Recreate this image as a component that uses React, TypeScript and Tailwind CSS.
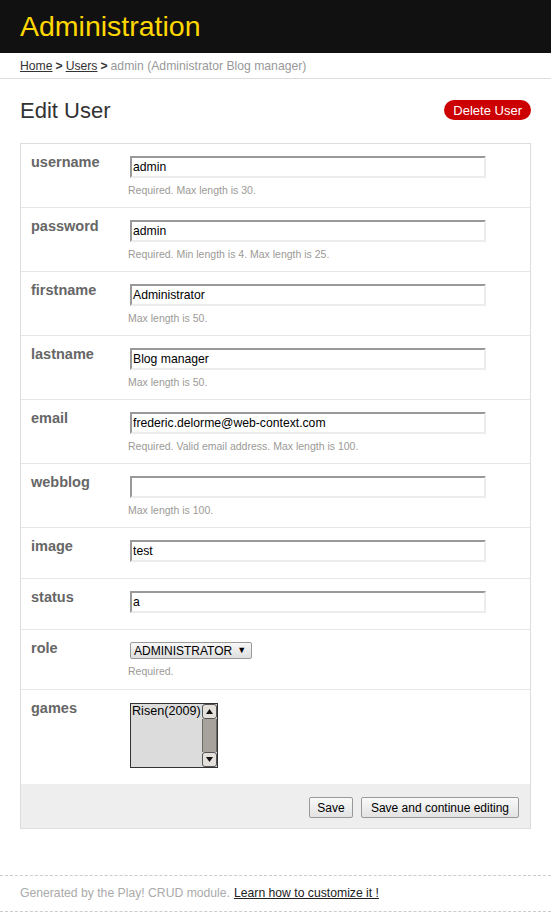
import React from "react";

const FONT = { fontFamily: '"Liberation Sans", Arial, sans-serif' };

interface Field {
  name: string;
  value: string;
  help?: string;
}

const FIELDS: Field[] = [
  { name: "username", value: "admin", help: "Required. Max length is 30." },
  { name: "password", value: "admin", help: "Required. Min length is 4. Max length is 25." },
  { name: "firstname", value: "Administrator", help: "Max length is 50." },
  { name: "lastname", value: "Blog manager", help: "Max length is 50." },
  {
    name: "email",
    value: "frederic.delorme@web-context.com",
    help: "Required. Valid email address. Max length is 100.",
  },
  { name: "webblog", value: "", help: "Max length is 100." },
  { name: "image", value: "test" },
  { name: "status", value: "a" },
];

function Label({ children }: { children: React.ReactNode }) {
  return (
    <div className="w-[99px] shrink-0 text-[14.5px] leading-[13px] font-bold text-[#666]">
      {children}
    </div>
  );
}

function Help({ children }: { children: React.ReactNode }) {
  return (
    <div className="mt-[6px] -ml-[2px] text-[10.5px] leading-[13px] text-[#9c9a96]">
      {children}
    </div>
  );
}

function TextRow({ field }: { field: Field }) {
  return (
    <div
      className={
        "flex pl-[10px] pt-[12px] border-b border-[#e6e6e6] " +
        (field.help ? "pb-[10px]" : "pb-[16px]")
      }
    >
      <Label>{field.name}</Label>
      <div>
        <div className="w-[356px] h-[22px] border-2 border-t-[#999] border-l-[#999] border-b-[#ececec] border-r-[#ececec] bg-white pl-[1px] text-[12.2px] leading-[18px] text-black">
          {field.value}
        </div>
        {field.help && <Help>{field.help}</Help>}
      </div>
    </div>
  );
}

function ScrollBtn({ up }: { up: boolean }) {
  return (
    <div className="h-[15px] border border-[#555] rounded-[3px] bg-[#e4e0dc] flex items-center justify-center">
      <svg width="7" height="5" viewBox="0 0 7 5">
        {up ? (
          <polygon points="3.5,0 7,5 0,5" fill="#111" />
        ) : (
          <polygon points="0,0 7,0 3.5,5" fill="#111" />
        )}
      </svg>
    </div>
  );
}

export default function App() {
  return (
    <div className="w-[551px] min-h-[912px] bg-white" style={FONT}>
      {/* Header */}
      <div className="h-[53px] bg-[#111] px-[20px] flex items-center">
        <h1 className="text-[28.5px] leading-none text-[#ffd700]">Administration</h1>
      </div>

      {/* Breadcrumb */}
      <div className="h-[26px] border-b border-[#ddd] px-[20px] pt-[1px] flex items-center text-[12.2px] text-[#999]">
        <a className="underline text-[#333]">Home</a>
        <span className="font-bold text-[#333] mx-[3px]">&gt;</span>
        <a className="underline text-[#333]">Users</a>
        <span className="font-bold text-[#333] mx-[3px]">&gt;</span>
        <span>admin (Administrator Blog manager)</span>
      </div>

      {/* Title */}
      <div className="h-[64px] px-[20px] flex items-center justify-between">
        <h2 className="text-[22px] leading-none text-[#333]">Edit User</h2>
        <button className="h-[20px] px-[9px] rounded-full bg-[#cc0000] text-white text-[13px] leading-none mt-[-2px]">
          Delete User
        </button>
      </div>

      {/* Form */}
      <div className="ml-[20px] w-[511px] border border-[#ddd]">
        {FIELDS.map((f) => (
          <TextRow key={f.name} field={f} />
        ))}

        {/* role */}
        <div className="flex pl-[10px] pt-[12px] pb-[11px] border-b border-[#e6e6e6]">
          <Label>role</Label>
          <div>
            <div className="h-[17px] w-[122px] border border-[#999] rounded-[2px] bg-gradient-to-b from-[#f8f8f8] to-[#dedede] flex items-center pl-[3px] text-[12px] leading-none text-black">
              ADMINISTRATOR
              <span className="ml-[5px] text-[9px]">▼</span>
            </div>
            <Help>Required.</Help>
          </div>
        </div>

        {/* games */}
        <div className="flex pl-[10px] pt-[12px] pb-[16px]">
          <Label>games</Label>
          <div className="mt-[1px] w-[88px] h-[65px] border border-[#333] bg-[#dcdcdc] flex">
            <div className="flex-1 pl-[1px] text-[12.6px] leading-[15px] text-black">Risen(2009)</div>
            <div className="w-[15px] flex flex-col">
              <ScrollBtn up />
              <div className="flex-1 bg-[#a8a29c] border-x border-[#6e6a66]" />
              <ScrollBtn up={false} />
            </div>
          </div>
        </div>

        {/* Actions */}
        <div className="bg-[#eee] pt-[13px] pb-[10px] pr-[11px] flex justify-end gap-[8px]">
          <button className="h-[21px] w-[44px] border border-[#999] rounded-[2px] bg-gradient-to-b from-[#fafafa] to-[#e2e2e2] text-[12px] leading-none text-black">
            Save
          </button>
          <button className="h-[21px] w-[158px] border border-[#999] rounded-[2px] bg-gradient-to-b from-[#fafafa] to-[#e2e2e2] text-[12px] leading-none text-black">
            Save and continue editing
          </button>
        </div>
      </div>

      {/* Footer */}
      <div className="mt-[46px] h-[37px] border-y border-dashed border-[#ccc] px-[20px] flex items-center text-[12.2px] text-[#aaa]">
        Generated by the Play! CRUD module.
        <a className="ml-[4px] underline text-[#222]">Learn how to customize it !</a>
      </div>
    </div>
  );
}
